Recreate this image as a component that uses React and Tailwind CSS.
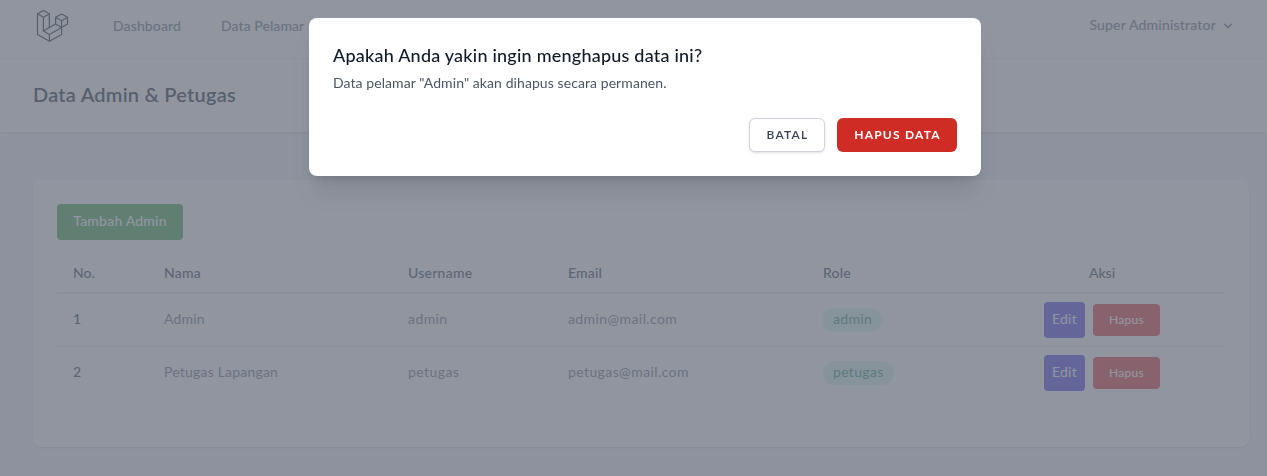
import React from "react";

const users = [
  { no: 1, nama: "Admin", username: "admin", email: "admin@mail.com", role: "admin" },
  { no: 2, nama: "Petugas Lapangan", username: "petugas", email: "petugas@mail.com", role: "petugas" },
];

const columns = "grid grid-cols-[91px_244px_160px_255px_172px_246px] items-center";

function Logo() {
  return (
    <svg
      className="h-9 w-9 shrink-0 text-[#1f2937]"
      viewBox="33 8 36 36"
      fill="none"
      stroke="currentColor"
      strokeWidth="1.2"
      strokeLinejoin="round"
    >
      <path d="M43.4 10.4 49.3 13.8 43.4 17.2 37.5 13.8Z" />
      <path d="M37.5 13.8V34.4L49.4 41.3 61.6 34.4V27.5" />
      <path d="M43.4 17.2V31L49.4 34.5V41.3" />
      <path d="M49.3 13.8V27.5" />
      <path d="M43.4 31 55.6 24" />
      <path d="M49.4 34.5 61.6 27.5" />
      <path d="M61.6 13.9 67.5 17.3V24L61.6 27.5 55.6 24V17.3Z" />
      <path d="M55.6 17.3 61.6 20.7 67.5 17.3M61.6 20.7V27.5" />
    </svg>
  );
}

function Navbar() {
  return (
    <nav className="flex h-[59px] items-start justify-between border-b border-[#f3f4f6] bg-white pl-[33px] pr-[31px] text-sm font-medium text-[#6b7280]">
      <div className="flex items-start">
        <div className="pt-2">
          <Logo />
        </div>
        <span className="ml-11 mt-4 tracking-[0.12px]">Dashboard</span>
        <span className="ml-10 mt-4 tracking-[0.06px]">Data Pelamar</span>
      </div>
      <div className="mt-[15px] flex items-center">
        <span className="tracking-[0.18px]">Super Administrator</span>
        <svg className="ml-1 mt-0.5 h-4 w-4" viewBox="0 0 20 20" fill="currentColor">
          <path
            fillRule="evenodd"
            clipRule="evenodd"
            d="M5.293 7.293a1 1 0 011.414 0L10 10.586l3.293-3.293a1 1 0 111.414 1.414l-4 4a1 1 0 01-1.414 0l-4-4a1 1 0 010-1.414z"
          />
        </svg>
      </div>
    </nav>
  );
}

function UserTable() {
  return (
    <div className="mt-4 text-sm text-[#6b7280]">
      <div className={`${columns} h-[38px] border-b-2 border-[#e5e7eb] pb-0.5 font-medium text-[#374151]`}>
        <div className="pl-4">No.</div>
        <div className="pl-4 tracking-[0.2px]">Nama</div>
        <div className="pl-4 tracking-[0.25px]">Username</div>
        <div className="pl-4 tracking-[0.15px]">Email</div>
        <div className="pl-4 tracking-[0.15px]">Role</div>
        <div className="text-center">Aksi</div>
      </div>
      {users.map((u) => (
        <div key={u.no} className={`${columns} h-[53px] border-b border-[#e5e7eb] last:border-transparent`}>
          <div className="pb-0.5 pl-4 font-medium text-[#374151]">{u.no}</div>
          <div className="pb-0.5 pl-4 tracking-[0.2px]">{u.nama}</div>
          <div className="pb-0.5 pl-4 tracking-[0.42px]">{u.username}</div>
          <div className="pb-0.5 pl-4 tracking-[0.4px]">{u.email}</div>
          <div className="pl-4">
            <span className="flex h-6 w-fit items-center rounded-full bg-[#d9f5ea] px-2.5 pb-0.5 tracking-[0.33px] text-[#34917a]">
              {u.role}
            </span>
          </div>
          <div className="flex items-center justify-center gap-2">
            <span className="flex h-9 w-[41px] items-center justify-center rounded bg-[#4f46e5] pb-0.5 tracking-[0.3px] text-white">
              Edit
            </span>
            <span className="flex h-8 w-[67px] items-center justify-center rounded bg-[#df3530] text-xs font-medium tracking-[0.3px] text-white">
              Hapus
            </span>
          </div>
        </div>
      ))}
    </div>
  );
}

function ConfirmModal() {
  return (
    <div className="fixed inset-0 flex items-start justify-center bg-[#6b7280]/75 pt-[18px]">
      <div className="ml-[23px] h-[158px] w-[672px] rounded-lg bg-white px-6 pt-[23px] shadow-xl">
        <h2 className="text-lg leading-7 font-medium tracking-[0.22px] text-[#111827]">
          Apakah Anda yakin ingin menghapus data ini?
        </h2>
        <p className="mt-1 text-sm tracking-[0.08px] text-[#4b5563]">
          Data pelamar "Admin" akan dihapus secara permanen.
        </p>
        <div className="mt-[25px] flex justify-end gap-3 text-xs">
          <button className="h-[34px] w-[76px] rounded-md border border-[#d1d5db] bg-white pl-px font-semibold tracking-[1.2px] text-[#374151] shadow-sm">
            BATAL
          </button>
          <button className="h-[34px] w-[120px] rounded-md bg-[#cf2c26] pl-px font-bold tracking-[1.2px] text-white">
            HAPUS DATA
          </button>
        </div>
      </div>
    </div>
  );
}

export default function App() {
  return (
    <div className="h-[476px] overflow-hidden bg-[#f3f4f6] font-['Lato',sans-serif]">
      <Navbar />
      <header className="h-[73px] bg-white pt-[23px] pl-[33px] shadow">
        <h2 className="text-xl leading-[25px] font-semibold tracking-[0.22px] text-[#1f2937]">
          Data Admin &amp; Petugas
        </h2>
      </header>
      <main className="pt-12 pl-[33px]">
        <section className="h-[267px] w-[1216px] rounded-lg bg-white p-6 shadow-sm">
          <button className="block h-9 w-[126px] rounded bg-[#41a348] pb-0.5 text-sm font-medium tracking-[0.2px] text-white">
            Tambah Admin
          </button>
          <UserTable />
        </section>
      </main>
      <ConfirmModal />
    </div>
  );
}
